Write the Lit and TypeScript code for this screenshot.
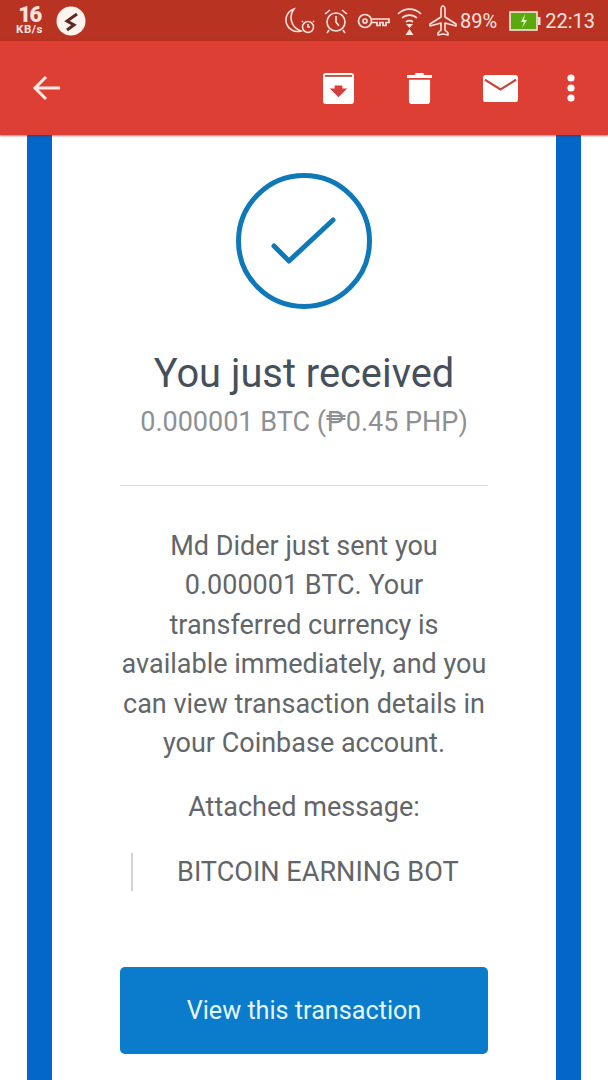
import { LitElement, html, css } from 'lit';
import { customElement } from 'lit/decorators.js';

@customElement('app-root')
export class AppRoot extends LitElement {
  static styles = css`
    :host {
      display: block;
      width: 608px;
      height: 1080px;
      overflow: hidden;
      background: #fff;
      font-family: Roboto, "Liberation Sans", sans-serif;
    }

    .status {
      height: 41px;
      background: #b93323;
      color: #f8e4dc;
      display: flex;
      align-items: center;
      padding: 0 13px 0 14px;
    }
    .speed {
      width: 31px;
      text-align: center;
      font-weight: 700;
    }
    .speed b { display: block; font-size: 22px; line-height: 18px; letter-spacing: -1.5px; }
    .speed small { display: block; font-size: 11.5px; line-height: 11px; white-space: nowrap; letter-spacing: 0.5px; }
    .vpn { margin-left: 11px; display: block; }
    .spacer { flex: 1; }
    .status-icons { display: flex; align-items: center; }
    .status-icons svg { display: block; }
    .alarm { margin-left: 9px; }
    .key { margin-left: 9px; }
    .wifi { margin-left: 7px; }
    .plane { margin-left: 7px; }
    .pct { font-size: 20px; margin-left: 3px; }
    .status-icons .batt { margin-left: 12px; }
    .time { font-size: 20px; margin-left: 4px; }

    .toolbar {
      height: 94px;
      background: #dd3f35;
      display: flex;
      align-items: center;
      box-shadow: 0 1px 2px rgba(120, 30, 20, 0.6);
      position: relative;
      padding-left: 32px;
    }
    .toolbar svg { display: block; }
    .actions { display: flex; align-items: center; margin-left: auto; padding-right: 33px; }
    .actions .archive { margin-right: 53px; }
    .actions .trash { margin-right: 51px; }
    .actions .mail { margin-right: 49px; }

    .page { padding: 0 27px; }
    .frame {
      width: 554px;
      height: 945px;
      box-sizing: border-box;
      border-left: 25px solid #0366c9;
      border-right: 25px solid #0366c9;
      padding: 38px 68px 0;
      text-align: center;
      overflow: hidden;
    }
    .check { display: block; margin: 0 auto; }
    h1 {
      margin: 40px -20px 0;
      font-size: 39.8px;
      line-height: 50px;
      font-weight: 400;
      color: #46505a;
    }
    .amount {
      margin: 8px -20px 0;
      font-size: 27px;
      line-height: 30px;
      color: #8d9194;
    }
    hr {
      border: 0;
      border-top: 1px solid #d9d9d9;
      margin: 48px 0 0;
    }
    .msg {
      margin: 41px -10px 0;
      font-size: 27px;
      line-height: 39.4px;
      color: #62666a;
    }
    .attached {
      margin: 25px 0 0;
      font-size: 27px;
      line-height: 39px;
      color: #62666a;
    }
    .quote {
      margin: 26px 0 0 11px;
      border-left: 2px solid #d4d4d4;
      padding-left: 44px;
      height: 38px;
      line-height: 38px;
      font-size: 27.1px;
      color: #62666a;
      text-align: left;
      white-space: nowrap;
    }
    .btn {
      margin-top: 76px;
      height: 87px;
      line-height: 87px;
      background: #0a7ccb;
      color: #e6f6fb;
      border-radius: 5px;
      font-size: 25.2px;
    }
  `;

  render() {
    return html`
      <div class="status">
        <div class="speed"><b>16</b><small>KB/s</small></div>
        <svg class="vpn" width="30" height="30" viewBox="0 0 30 30">
          <circle cx="15" cy="15" r="14.5" fill="#fdf4f0" />
          <path d="M21 8l-10 7 7 4-7 5" fill="none" stroke="#5c2a22" stroke-width="3" />
        </svg>
        <div class="spacer"></div>
        <div class="status-icons">
          <svg width="30" height="28" viewBox="0 0 30 28" fill="none" stroke="#f8e4dc" stroke-width="1.5">
            <path d="M9 2A11.500 11.500 0 1 0 16 24A14 14 0 0 1 9 2z" />
            <circle cx="23" cy="20" r="5.5" />
            <path d="M18 14l-1 1M28 14l1 1M23 17v3h2" />
          </svg>
          <svg class="alarm" width="24" height="26" viewBox="0 0 24 26" fill="none" stroke="#f8e4dc" stroke-width="1.6">
            <circle cx="12" cy="14" r="9" />
            <path d="M12 8v6l3 4M1 6l5-4M23 6l-5-4M5 22l-2 3M19 22l2 3" />
          </svg>
          <svg class="key" width="33" height="20" viewBox="0 0 33 20" fill="none" stroke="#f8e4dc" stroke-width="1.7">
            <circle cx="8" cy="10" r="6.5" />
            <circle cx="8" cy="10" r="2" />
            <path d="M14.5 8H32v3.5h-3v3h-3v-3h-3v3h-3v-3h-5.5" />
          </svg>
          <svg class="wifi" width="25" height="30" viewBox="0 0 25 30">
            <path d="M1 8a16 16 0 0 1 23 0M5 12a11 11 0 0 1 15 0M9 16a6 6 0 0 1 7 0" fill="none" stroke="#f8e4dc" stroke-width="1.7" />
            <path d="M9 18h7l-3.500 4zM12.500 23l-4 6h8z" fill="#f8e4dc" />
          </svg>
          <svg class="plane" width="28" height="32" viewBox="0 0 28 32" fill="none" stroke="#f8e4dc" stroke-width="1.6" stroke-linejoin="round">
            <path d="M14 1c-1.500 0-2 2-2 4v7L1 19v2l11-3v7l-3 3v2l5-1 5 1v-2l-3-3v-7l11 3v-2L16 12V5c0-2-.5-4-2-4z" />
          </svg>
          <span class="pct">89%</span>
          <svg class="batt" width="32" height="20" viewBox="0 0 32 20">
            <rect x="1" y="1" width="27" height="18" fill="#5aa90f" stroke="#f8e4dc" stroke-width="1.6" />
            <rect x="29" y="6" width="2.500" height="8" fill="#f8e4dc" />
            <path d="M16 3l-4 8h3l-2 6 5-8h-3z" fill="#e6f2c0" />
          </svg>
          <span class="time">22:13</span>
        </div>
      </div>

      <div class="toolbar">
        <svg width="28" height="26" viewBox="0 0 28 26" fill="none" stroke="#fbe9e4" stroke-width="3">
          <path d="M14 2L3 13l11 11M3 13h25" />
        </svg>
        <div class="actions">
          <svg class="archive" width="31" height="31" viewBox="0 0 32 32">
            <rect width="32" height="32" rx="3" fill="#fff" />
            <rect x="2" y="2" width="28" height="2" fill="#b9544c" />
            <path d="M16 25l-9-9h5v-3h8v3h5z" fill="#d5403a" />
          </svg>
          <svg class="trash" width="25" height="31" viewBox="0 0 26 32">
            <path d="M9 0h8l1 2h8v3H0V2h8zM2 7h22v22a3 3 0 0 1-3 3H5a3 3 0 0 1-3-3z" fill="#fff" />
          </svg>
          <svg class="mail" width="35" height="29" viewBox="0 0 36 28">
            <rect width="36" height="28" rx="3" fill="#fff" />
            <path d="M2 5l16 10L34 5" fill="none" stroke="#c9453c" stroke-width="2.200" />
          </svg>
          <svg width="8" height="28" viewBox="0 0 8 28" fill="#fff">
            <circle cx="4" cy="4" r="3.600" /><circle cx="4" cy="14" r="3.600" /><circle cx="4" cy="24" r="3.600" />
          </svg>
        </div>
      </div>

      <div class="page">
        <div class="frame">
          <svg class="check" width="136" height="136" viewBox="0 0 136 136" fill="none" stroke="#0f79b8" stroke-linecap="round">
            <circle cx="68" cy="68" r="65.500" stroke-width="5" />
            <path d="M38 73l15 15 44-41" stroke-width="5" stroke-linejoin="round" />
          </svg>
          <h1>You just received</h1>
          <div class="amount">0.000001 BTC (₱0.45 PHP)</div>
          <hr />
          <p class="msg">
            Md Dider just sent you<br />0.000001 BTC. Your<br />transferred currency is<br />available immediately, and you<br />can view transaction details in<br />your Coinbase account.
          </p>
          <p class="attached">Attached message:</p>
          <div class="quote">BITCOIN EARNING BOT</div>
          <div class="btn">View this transaction</div>
        </div>
      </div>
    `;
  }
}
